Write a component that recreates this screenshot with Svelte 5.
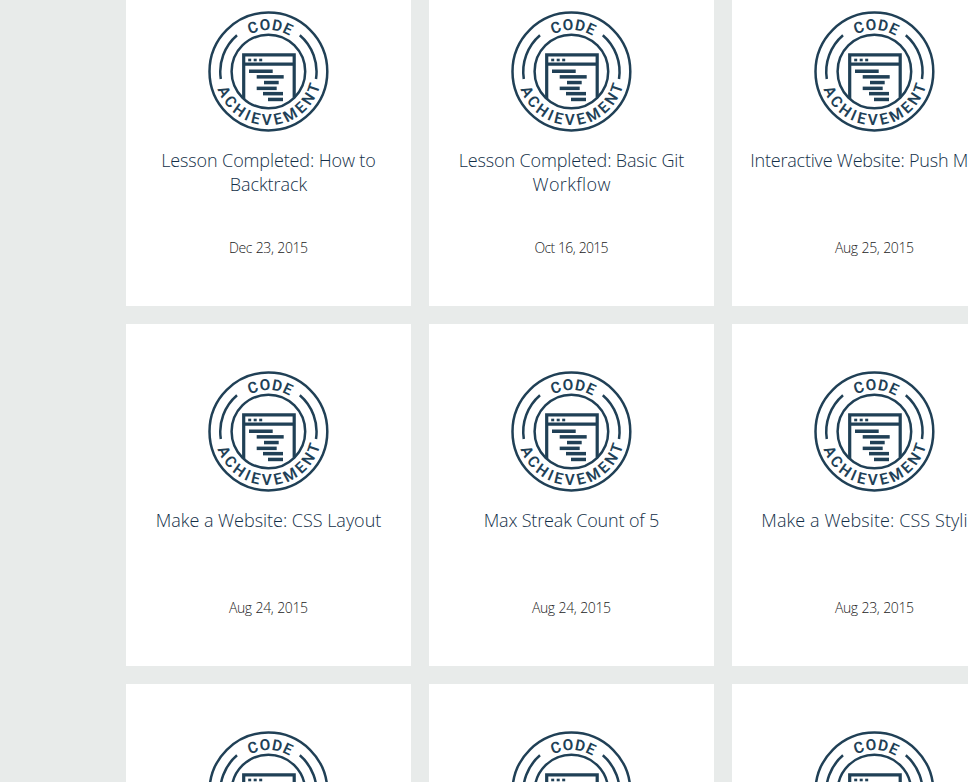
<script>
  const badges = [
    { lines: [['Lesson Completed: How to', 214], ['Backtrack', 77]], date: 'Dec 23, 2015', dateWidth: 78 },
    { lines: [['Lesson Completed: Basic Git', 225], ['Workflow', 78]], date: 'Oct 16, 2015', dateWidth: 73 },
    { lines: [['Interactive Website: Push Menu', 248]], date: 'Aug 25, 2015', dateWidth: 78 },
    { lines: [['Make a Website: CSS Layout', 225]], date: 'Aug 24, 2015', dateWidth: 78 },
    { lines: [['Max Streak Count of 5', 175]], date: 'Aug 24, 2015', dateWidth: 78 },
    { lines: [['Make a Website: CSS Styling', 226]], date: 'Aug 23, 2015', dateWidth: 78 },
    { lines: [], date: '' },
    { lines: [], date: '' },
    { lines: [], date: '' }
  ];

  const bars = [
    [40.6, 58, 23.7],
    [48.3, 63.6, 27],
    [55.6, 69.3, 14.7],
    [48.3, 75.1, 20],
    [54.6, 80.4, 20],
    [59.6, 86.2, 15]
  ];

  // Tracks the text so that the line has the given width.
  function track(node, width) {
    const natural = node.getBoundingClientRect().width;
    const spacing = (width + 0.5 - natural) / node.textContent.length;
    node.style.letterSpacing = `${spacing}px`;
    node.style.marginRight = `${-spacing}px`;
  }
</script>

{#snippet emblem(i)}
  <svg class="emblem" viewBox="-0.4 -0.5 120 120" role="img" aria-label="Code achievement">
    <defs>
      <path id="top-{i}" d="M18.6 60A41.4 41.4 0 0 1 101.4 60" />
      <path id="bottom-{i}" d="M6.3 60A53.7 53.7 0 0 0 113.7 60" />
    </defs>
    <g class="stroke">
      <circle cx="60" cy="60" r="58.9" />
      <circle cx="60" cy="60" r="36.8" />
      <path d="M12.4 67.5A48 48 0 0 1 28.6 23.8M107.6 67.5A48 48 0 0 0 91.4 23.8" />
      <path class="frame" d="M35.3 87.5V43.4H85.8V86M35.3 52.7H85.8" />
    </g>
    <g class="fill">
      <rect x="39.8" y="47.2" width="3" height="2.6" />
      <rect x="45.3" y="47.2" width="3" height="2.6" />
      <rect x="50.8" y="47.2" width="3" height="2.6" />
      {#each bars as [x, y, w]}
        <rect {x} {y} width={w} height="3.5" />
      {/each}
    </g>
    <text class="code"><textPath href="#top-{i}" startOffset="51.4%">CODE</textPath></text>
    <text class="achievement"><textPath href="#bottom-{i}" startOffset="52%">ACHIEVEMENT</textPath></text>
  </svg>
{/snippet}

<main class="page">
  <div class="grid">
    {#each badges as badge, i}
      <article class="card">
        {@render emblem(i)}
        <h2 class="title">
          {#each badge.lines as [text, width]}
            <span class="line"><span class="run" use:track={width}>{text}</span></span>
          {/each}
        </h2>
        {#if badge.date}
          <small class="date"><span class="run" use:track={badge.dateWidth}>{badge.date}</span></small>
        {/if}
      </article>
    {/each}
  </div>
</main>

<style>
  :global(body) {
    margin: 0;
    background: #e8ebea;
  }
  .page {
    box-sizing: border-box;
    height: 782px;
    padding-left: 126px;
    overflow: hidden;
    background: #e8ebea;
    font-family: 'Open Sans', 'Noto Sans', sans-serif;
    font-weight: 300;
  }
  .grid {
    display: grid;
    grid-template-columns: repeat(3, 285px);
    grid-auto-rows: 342px;
    gap: 18px;
    margin-top: -36px;
  }
  .card {
    box-sizing: border-box;
    display: flex;
    flex-direction: column;
    align-items: center;
    padding-top: 47px;
    background: #fff;
  }
  .emblem {
    display: block;
    flex: none;
    width: 120px;
    height: 120px;
    margin-right: 1px;
    overflow: visible;
  }
  .stroke {
    fill: none;
    stroke: #204056;
    stroke-width: 2.5;
  }
  .frame {
    stroke-width: 3.2;
  }
  .fill {
    fill: #204056;
  }
  .emblem text {
    fill: #204056;
    font-family: Roboto, sans-serif;
    font-size: 15.4px;
    font-weight: 600;
    text-anchor: middle;
  }
  .code {
    letter-spacing: 0.7px;
  }
  .achievement {
    letter-spacing: 3.1px;
  }
  .title {
    display: flex;
    flex-direction: column;
    align-items: center;
    height: 72px;
    margin: 17px 0 0;
    color: #132f48;
    font-size: 18px;
    font-weight: 300;
    line-height: 24px;
  }
  .line {
    display: block;
  }
  .run {
    display: inline-block;
    white-space: nowrap;
  }
  .date {
    margin-top: 16px;
    color: #222;
    font-size: 14px;
    line-height: 24px;
    word-spacing: 0.7px;
  }
</style>
